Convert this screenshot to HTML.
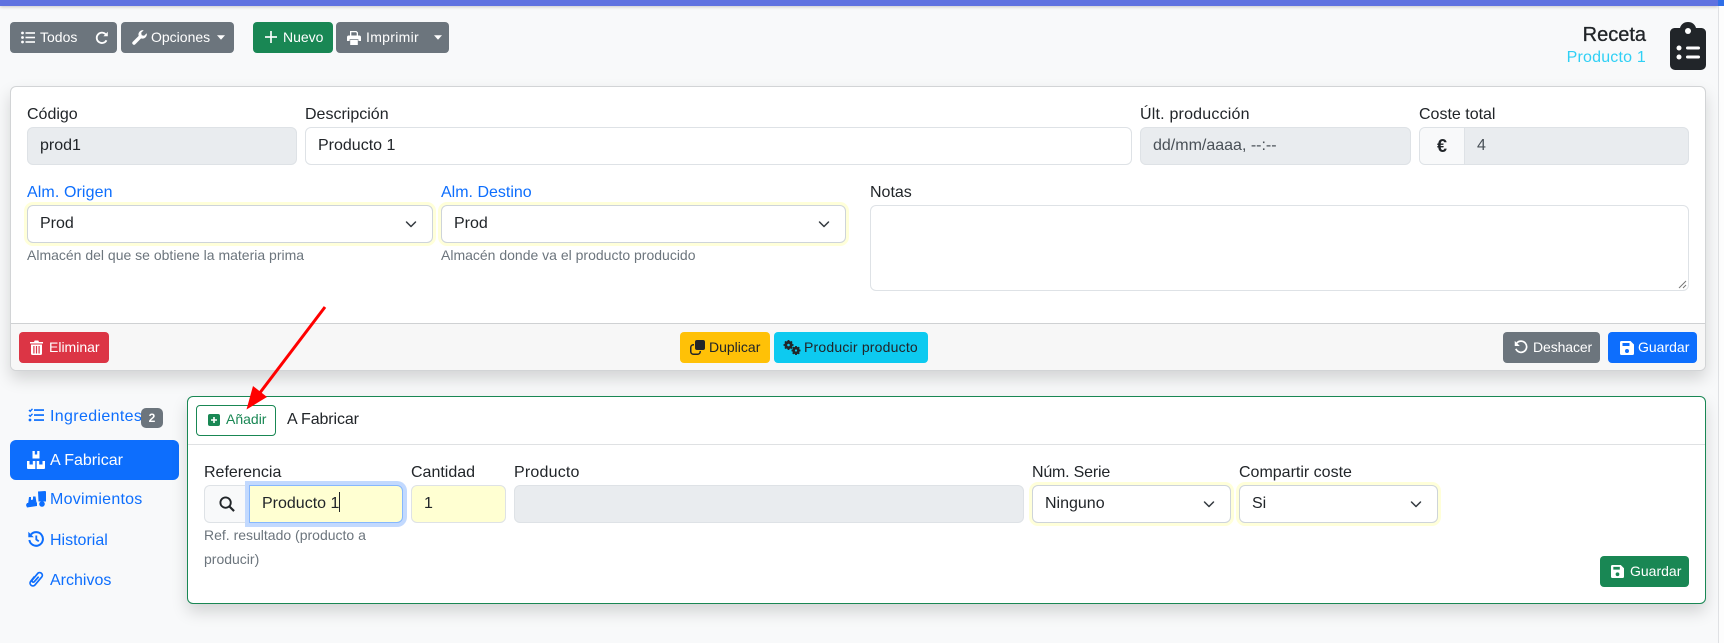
<!DOCTYPE html>
<html lang="es"><head><meta charset="utf-8"><title>Receta</title>
<style>
*{box-sizing:border-box}
html,body{margin:0;padding:0;width:1724px;height:643px;overflow:hidden;background:#f8f9fa;font-family:"Liberation Sans","DejaVu Sans",sans-serif;color:#212529}
.a{position:absolute}
.t{position:absolute;white-space:nowrap;line-height:20px;height:20px;font-size:16px;margin-top:1px}
.btn{position:absolute;height:31px;border-radius:4px;background:#6c757d;color:#fff;font-size:14px;line-height:31px;white-space:nowrap}
.btn span{position:absolute;top:0}
.btn svg,.ic{position:absolute}
.in{position:absolute;height:38px;border:1px solid #dee2e6;border-radius:6px;background:#fff;font-size:16px;line-height:36px;padding-left:12px;white-space:nowrap}
.dis{background:#e9ecef}
.sel{box-shadow:0 0 0 3px #ffffd9;border-color:#ced4da}
.sel svg{position:absolute;right:13px;top:12px}
.help{position:absolute;font-size:14px;color:#6c757d;line-height:24px;white-space:nowrap}
.nav{color:#0d6efd}
</style></head><body>

<div class="a" style="left:0;top:0;width:1718px;height:6px;background:#5f72e0;box-shadow:0 1px 3px rgba(0,0,0,.2)"></div>
<div class="a" style="left:1718px;top:0;width:6px;height:643px;background:#fdfdfd;border-left:1px solid #dfe1e4"></div>
<div class="a" style="left:1718px;top:0;width:6px;height:6px;background:#2f6fe8"></div>

<!-- toolbar -->
<div class="btn" style="left:10px;top:22px;width:107px">
<svg style="left:11px;top:9px" width="14" height="13" viewBox="0 0 14 13" fill="#fff"><circle cx="1.5" cy="2" r="1.4"/><circle cx="1.5" cy="6.5" r="1.4"/><circle cx="1.5" cy="11" r="1.4"/><rect x="4.5" y="1.2" width="9.5" height="1.6"/><rect x="4.5" y="5.7" width="9.5" height="1.6"/><rect x="4.5" y="10.200" width="9.500" height="1.600"/></svg>
<span style="left:30px">Todos</span>
<svg style="left:85px;top:9px" width="14" height="14" viewBox="0 0 14 14" fill="none" stroke="#fff" stroke-width="1.800"><path d="M11.500 9.300A5.200 5.200 0 1 1 11 3.600"/><path d="M12.800 .8v4.400H8.400" fill="#fff" stroke="none"/></svg>
</div>
<div class="btn" style="left:121px;top:22px;width:113px">
<svg style="left:11px;top:8px" width="15" height="15" viewBox="0 0 15 15" fill="#fff"><path d="M14.700 3.300a4.300 4.300 0 0 1-5.600 5.100L3.300 14.300a1.700 1.700 0 0 1-2.500-2.500l5.900-5.900A4.300 4.300 0 0 1 11.700.3L9.200 2.800l.5 2.400 2.400.6z"/></svg>
<span style="left:30px">Opciones</span>
<svg style="left:96px;top:13px" width="8" height="5" viewBox="0 0 9 5" fill="#fff"><path d="M0 0h9L4.500 5z"/></svg>
</div>
<div class="btn" style="left:253px;top:22px;width:80px;background:#198754">
<svg style="left:12px;top:9px" width="12" height="12" viewBox="0 0 13 13" fill="#fff"><rect x="5.600" y="0" width="1.800" height="13"/><rect x="0" y="5.600" width="13" height="1.800"/></svg>
<span style="left:30px">Nuevo</span>
</div>
<div class="btn" style="left:336px;top:22px;width:113px">
<svg style="left:11px;top:9px" width="14" height="14" viewBox="0 0 14 14" fill="#fff"><path d="M3 0h6.500L11 1.500V5H3zM4.300 1.300V5h5.400V2L9 1.300z" fill-rule="evenodd"/><path d="M1.800 4.500h10.400A1.800 1.800 0 0 1 14 6.300V10h-2.600V8.300H2.600V10H0V6.300a1.800 1.800 0 0 1 1.800-1.800z"/><path d="M3.200 9h7.600v5H3.200z"/></svg>
<span style="left:30px;letter-spacing:.3px">Imprimir</span>
<svg style="left:98px;top:13px" width="8" height="5" viewBox="0 0 9 5" fill="#fff"><path d="M0 0h9L4.500 5z"/></svg>
</div>

<!-- title -->
<div class="t" style="right:78px;top:24px;font-size:20px;-webkit-text-stroke:.3px #212529">Receta</div>
<div class="t" style="right:78px;top:47px;color:#2fd0f5;letter-spacing:.2px">Producto 1</div>
<svg class="a" style="left:1670px;top:22px" width="36" height="48" viewBox="0 0 36 48" fill="#212529"><path d="M18 0c4 0 7 2.300 8 6h5.500A4.500 4.500 0 0 1 36 10.500V43a5 5 0 0 1-5 5H5a5 5 0 0 1-5-5V10.500A4.500 4.500 0 0 1 4.500 6H10c1-3.700 4-6 8-6z"/><g fill="#fff"><circle cx="18" cy="9" r="3"/><circle cx="9" cy="26" r="2.500"/><circle cx="9" cy="35" r="2.500"/><rect x="16" y="24.500" width="14" height="3" rx="1.500"/><rect x="16" y="33.500" width="14" height="3" rx="1.500"/></g></svg>

<!-- main card -->
<div class="a" style="left:10px;top:86px;width:1696px;height:285px;background:#fff;border:1px solid #d2d4d6;border-radius:6px;box-shadow:0 8px 16px rgba(0,0,0,.15)"></div>
<div class="a" style="left:11px;top:323px;width:1694px;height:47px;background:#f7f7f7;border-top:1px solid #cfd1d3;border-radius:0 0 5px 5px"></div>

<div class="t" style="left:27px;top:104px">Código</div>
<div class="in dis" style="left:27px;top:127px;width:270px">prod1</div>
<div class="t" style="left:305px;top:104px">Descripción</div>
<div class="in" style="left:305px;top:127px;width:827px">Producto 1</div>
<div class="t" style="left:1140px;top:104px;letter-spacing:.2px">Últ. producción</div>
<div class="in dis" style="left:1140px;top:127px;width:271px;color:#495057">dd/mm/aaaa, --:--</div>
<div class="t" style="left:1419px;top:104px">Coste total</div>
<div class="in dis" style="left:1419px;top:127px;width:270px;padding-left:0">
<div class="a" style="left:0;top:0;width:45px;height:36px;background:#f8f9fa;border-right:1px solid #dee2e6;border-radius:5px 0 0 5px;text-align:center;font-weight:bold;font-size:18px">€</div>
<span class="a" style="left:57px;top:0;color:#495057">4</span></div>

<div class="t nav" style="left:27px;top:182px;letter-spacing:.1px">Alm. Origen</div>
<div class="in sel" style="left:27px;top:205px;width:406px">Prod<svg width="16" height="12" viewBox="0 0 16 12" fill="none" stroke="#343a40" stroke-width="1.500" stroke-linecap="round" stroke-linejoin="round"><path d="M3.500 4 8 8.500 12.500 4"/></svg></div>
<div class="help" style="left:27px;top:243px">Almacén del que se obtiene la materia prima</div>
<div class="t nav" style="left:441px;top:182px">Alm. Destino</div>
<div class="in sel" style="left:441px;top:205px;width:405px">Prod<svg width="16" height="12" viewBox="0 0 16 12" fill="none" stroke="#343a40" stroke-width="1.500" stroke-linecap="round" stroke-linejoin="round"><path d="M3.500 4 8 8.500 12.500 4"/></svg></div>
<div class="help" style="left:441px;top:243px">Almacén donde va el producto producido</div>
<div class="t" style="left:870px;top:182px">Notas</div>
<div class="a" style="left:870px;top:205px;width:819px;height:86px;background:#fff;border:1px solid #dee2e6;border-radius:6px">
<svg class="a" style="right:1px;bottom:1px" width="9" height="9" viewBox="0 0 9 9" stroke="#777" stroke-width="1"><path d="M1 8 8 1M5 8 8 5"/></svg></div>

<!-- footer buttons -->
<div class="btn" style="left:19px;top:332px;width:90px;background:#dc3545">
<svg style="left:11px;top:8px" width="13" height="15" viewBox="0 0 13 15" fill="#fff"><path d="M0 2h4l.7-1.500h3.600L9 2h4v1.500H0z"/><path d="M1 4.500h11V13.500a1.500 1.500 0 0 1-1.500 1.500h-8A1.500 1.500 0 0 1 1 13.500zM3.300 6v7.500h1.200V6zm2.600 0v7.500h1.200V6zm2.600 0v7.500h1.200V6z" fill-rule="evenodd"/></svg>
<span style="left:30px">Eliminar</span>
</div>
<div class="btn" style="left:680px;top:332px;width:90px;background:#ffc107;color:#212529">
<svg style="left:10px;top:8px" width="15" height="15" viewBox="0 0 15 15" fill="#212529"><rect x="5" y="0" width="10" height="10" rx="2"/><path d="M3.500 4H4v1.500h-.5A2 2 0 0 0 1.500 7v4.500a2 2 0 0 0 2 2H8a2 2 0 0 0 1.500-2V11H11v.5A3.500 3.500 0 0 1 7.500 15h-4A3.500 3.500 0 0 1 0 11.500v-4A3.500 3.500 0 0 1 3.500 4z"/></svg>
<span style="left:29px">Duplicar</span>
</div>
<div class="btn" style="left:774px;top:332px;width:154px;background:#0dcaf0;color:#212529">
<svg style="left:9px;top:8px" width="18" height="15" viewBox="0 0 18 15" fill="#212529"><circle cx="5.500" cy="5" r="2.700" fill="none" stroke="#212529" stroke-width="2.800"/><circle cx="13" cy="10.500" r="2.400" fill="none" stroke="#212529" stroke-width="2.600"/><g stroke="#212529" stroke-width="1.800"><path d="M5.500 0v2M5.500 8v2M.5 5h2M8.500 5h2M2 1.500l1.300 1.300M7.700 7.200 9 8.500M9 1.500 7.700 2.800M3.300 7.200 2 8.500"/><path d="M13 6v1.500M13 13.500V15M8.500 10.500H10M16 10.500h1.500M9.800 7.300l1 1M15.200 12.700l1 1M16.200 7.300l-1 1M10.800 12.700l-1 1"/></g></svg>
<span style="left:30px;letter-spacing:.2px">Producir producto</span>
</div>
<div class="btn" style="left:1503px;top:332px;width:97px">
<svg style="left:11px;top:8px" width="14" height="14" viewBox="0 0 15 15" fill="none" stroke="#fff" stroke-width="1.800"><path d="M3 3.300A6 6 0 1 1 2 9.500"/><path d="M.8 1v5.400h5.400z" fill="#fff" stroke="none"/></svg>
<span style="left:30px;letter-spacing:-.1px">Deshacer</span>
</div>
<div class="btn" style="left:1608px;top:332px;width:89px;background:#0d6efd">
<svg style="left:12px;top:9px" width="14" height="14" viewBox="0 0 14 14" fill="#fff"><path d="M1.500 0H10.500L14 3.500V12.500A1.500 1.500 0 0 1 12.500 14H1.500A1.500 1.500 0 0 1 0 12.500V1.500A1.500 1.500 0 0 1 1.500 0zM2.500 2v3h7V2zM7 8a2 2 0 1 0 0 4 2 2 0 0 0 0-4z" fill-rule="evenodd"/></svg>
<span style="left:30px">Guardar</span>
</div>

<!-- left nav -->
<svg class="a" style="left:28px;top:408px" width="16" height="14" viewBox="0 0 16 14" fill="#0d6efd"><path d="M1 2 2.200 3.200 4.500 .8M1 7 2.200 8.200 4.500 5.800" fill="none" stroke="#0d6efd" stroke-width="1.400"/><circle cx="2" cy="12" r="1.400"/><rect x="6" y="1.200" width="10" height="1.700"/><rect x="6" y="6.200" width="10" height="1.700"/><rect x="6" y="11.200" width="10" height="1.700"/></svg>
<div class="t nav" style="left:50px;top:406px;letter-spacing:.35px">Ingredientes</div>
<div class="a" style="left:141px;top:408px;width:22px;height:20px;background:#6c757d;border-radius:5px;color:#fff;font-size:12px;font-weight:bold;line-height:20px;text-align:center">2</div>
<div class="a" style="left:10px;top:440px;width:169px;height:40px;background:#0d6efd;border-radius:6px"></div>
<svg class="a" style="left:27px;top:451px" width="18" height="18" viewBox="0 0 18 18" fill="#fff"><path d="M5.500 0h2.300v3.500h2.400V0h2.300v7.500h-7zM0 10h2.500v3.500h3.300V10H8.300v8H1a1 1 0 0 1-1-1zM9.700 10h2.500v3.500h3.300V10H18v7a1 1 0 0 1-1 1H9.700z"/></svg>
<div class="t" style="left:50px;top:450px;color:#fff">A Fabricar</div>
<svg class="a" style="left:26px;top:491px" width="20" height="17" viewBox="0 0 20 17" fill="#0d6efd"><path d="M12 .5 19 0a1 1 0 0 1 1 1v9.500h-7.500z"/><circle cx="16" cy="13" r="2.800"/><path d="M3 6h2v3l2-.5V5.500h2.500l1 6L2 13.500z"/><path d="M1 12 11 11.500V15L1 16.500 0 14z"/></svg>
<div class="t nav" style="left:50px;top:489px;letter-spacing:.25px">Movimientos</div>
<svg class="a" style="left:28px;top:531px" width="16" height="16" viewBox="0 0 16 16" fill="none" stroke="#0d6efd" stroke-width="2"><path d="M3 3.500A6.800 6.800 0 1 1 1.400 9"/><path d="M.3 .8v5.500h5.500z" fill="#0d6efd" stroke="none"/><path d="M8.300 4.500v4l2.500 1.800" stroke-width="1.800"/></svg>
<div class="t nav" style="left:50px;top:530px">Historial</div>
<svg class="a" style="left:29px;top:571px" width="15" height="16" viewBox="0 0 15 16" fill="none" stroke="#0d6efd" stroke-width="1.700"><path d="M5.500 5.500 1.700 10.300a2.800 2.800 0 0 0 4.300 3.600l6.800-8a2.700 2.700 0 0 0-4.100-3.500L3.300 9a1.300 1.300 0 0 0 2 1.700l4.400-5"/></svg>
<div class="t nav" style="left:50px;top:570px">Archivos</div>

<!-- panel -->
<div class="a" style="left:187px;top:396px;width:1519px;height:208px;background:#fff;border:1px solid #198754;border-radius:6px;box-shadow:0 8px 16px rgba(0,0,0,.15)"></div>
<div class="a" style="left:188px;top:444px;width:1517px;height:1px;background:#dfe1e3"></div>
<div class="a" style="left:196px;top:405px;width:80px;height:31px;border:1px solid #198754;border-radius:4px;color:#198754;font-size:14px;line-height:29px">
<svg class="a" style="left:11px;top:8px" width="12" height="12" viewBox="0 0 12 12"><rect width="12" height="12" rx="2" fill="#198754"/><path d="M6 3v6M3 6h6" stroke="#fff" stroke-width="1.600"/></svg>
<span class="a" style="left:29px;top:-1px;white-space:nowrap">Añadir</span></div>
<div class="t" style="left:287px;top:409px;letter-spacing:-.1px">A Fabricar</div>

<div class="t" style="left:204px;top:462px">Referencia</div>
<div class="in" style="left:204px;top:485px;width:46px;background:#f8f9fa;border-radius:6px 0 0 6px;border-right:0">
<svg class="a" style="left:14px;top:10px" width="16" height="16" viewBox="0 0 17 17" fill="none" stroke="#212529" stroke-width="2"><circle cx="7" cy="7" r="5.500"/><path d="M11 11l5 5" stroke-width="2.300"/></svg></div>
<div class="in" style="left:249px;top:485px;width:154px;background:#ffffd2;border-color:#86b7fe;box-shadow:0 0 0 4px #c2d9fe;border-radius:0 6px 6px 0;z-index:1">Producto 1<span style="display:inline-block;width:1px;height:20px;background:#212529;vertical-align:-4px"></span></div>
<div class="help" style="left:204px;top:523px">Ref. resultado (producto a<br>producir)</div>
<div class="t" style="left:411px;top:462px">Cantidad</div>
<div class="in" style="left:411px;top:485px;width:95px;background:#ffffd2">1</div>
<div class="t" style="left:514px;top:462px;letter-spacing:.2px">Producto</div>
<div class="in dis" style="left:514px;top:485px;width:510px"></div>
<div class="t" style="left:1032px;top:462px;letter-spacing:-.2px">Núm. Serie</div>
<div class="in sel" style="left:1032px;top:485px;width:199px">Ninguno<svg width="16" height="12" viewBox="0 0 16 12" fill="none" stroke="#343a40" stroke-width="1.500" stroke-linecap="round" stroke-linejoin="round"><path d="M3.500 4 8 8.500 12.500 4"/></svg></div>
<div class="t" style="left:1239px;top:462px">Compartir coste</div>
<div class="in sel" style="left:1239px;top:485px;width:199px">Si<svg width="16" height="12" viewBox="0 0 16 12" fill="none" stroke="#343a40" stroke-width="1.500" stroke-linecap="round" stroke-linejoin="round"><path d="M3.500 4 8 8.500 12.500 4"/></svg></div>
<div class="btn" style="left:1600px;top:556px;width:89px;background:#198754">
<svg style="left:11px;top:9px" width="13" height="13" viewBox="0 0 14 14" fill="#fff"><path d="M1.500 0H10.500L14 3.500V12.500A1.500 1.500 0 0 1 12.500 14H1.500A1.500 1.500 0 0 1 0 12.500V1.500A1.500 1.500 0 0 1 1.500 0zM2.500 2v3h7V2zM7 8a2 2 0 1 0 0 4 2 2 0 0 0 0-4z" fill-rule="evenodd"/></svg>
<span style="left:30px">Guardar</span>
</div>

<!-- arrow -->
<svg class="a" style="left:0;top:0;z-index:5" width="1724" height="643" viewBox="0 0 1724 643"><path d="M325 307 259 394" stroke="#f00" stroke-width="3" fill="none"/><path d="M246.500 409.500 253 386 267 397z" fill="#f00"/></svg>
</body></html>
